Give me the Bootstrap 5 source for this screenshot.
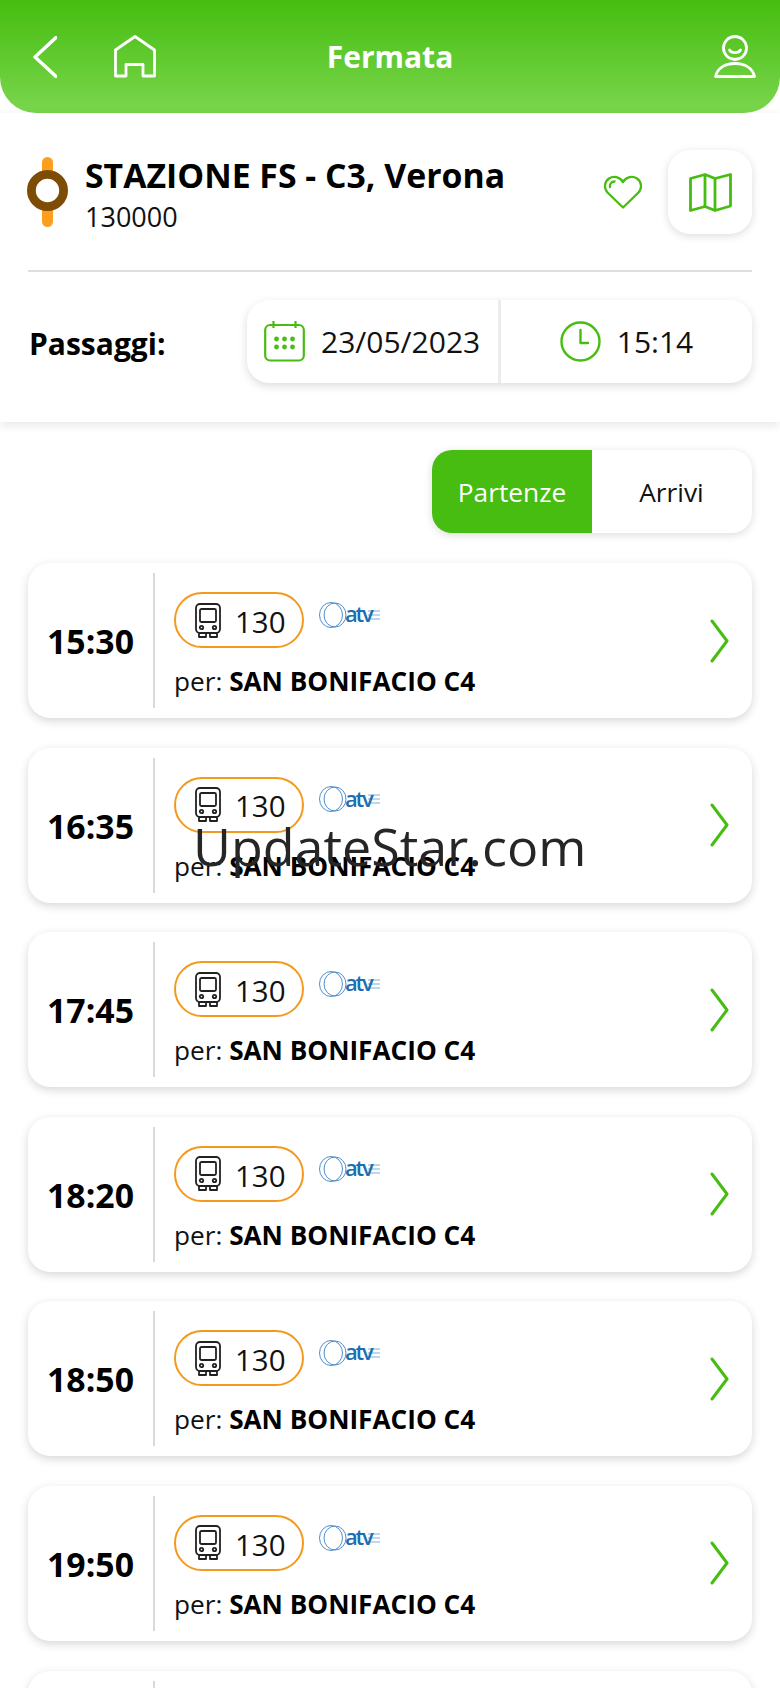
<!DOCTYPE html>
<html lang="it">
<head>
<meta charset="utf-8">
<title>Fermata</title>
<link href="https://cdn.jsdelivr.net/npm/bootstrap@5.3.0/dist/css/bootstrap.min.css" rel="stylesheet">
<style>
html,body{height:1688px;overflow:hidden;background:#fff}
body{font-family:"Open Sans",sans-serif;color:#000;position:relative}
.app-head{height:113px;border-radius:0 0 36px 36px;background:linear-gradient(180deg,#46bd10 0%,#7ad64d 100%);padding:0 24px 0 33px}
.app-head h1{font-size:30px;font-weight:700;color:#fff;margin:0;position:absolute;left:0;right:0;top:37px;text-align:center;line-height:40px}
.home-ic{margin-left:57px}
.top-panel{height:309px;padding:0 28px;box-shadow:0 3px 10px rgba(0,0,0,.1);position:relative;background:#fff}
.stop-row{height:159px;border-bottom:2px solid #dedede;padding-top:44px}
.stop-ic{margin-left:-1px;margin-right:17px}
.stop-name{font-size:33.8px;font-weight:700;line-height:43px;margin-top:-3px}
.stop-code{font-size:27px;line-height:30px;margin-top:5px;color:#111}
.map-btn{width:84px;height:84px;border-radius:22px;box-shadow:0 2px 9px rgba(0,0,0,.14);background:#fff;margin-left:26px;margin-top:-7px}
.heart-ic{margin-top:18px}
.pass-row{height:135px;padding-top:28px}
.pass-label{font-size:30px;font-weight:700;margin-left:1px;line-height:88px}
.picker{width:505px;height:83px;border-radius:22px;box-shadow:0 3px 10px rgba(0,0,0,.14);background:#fff;overflow:hidden}
.pick-date{width:254px;border-right:3px solid #ececec;padding-left:17px;gap:16px}
.pick-time{flex:1;gap:16px;justify-content:center}
.pick-txt{font-size:30px;line-height:85px;color:#111}
.toggle-wrap{padding:28px 28px 30px 0}
.toggle-box{width:320px;height:83px;border-radius:20px;box-shadow:0 2px 9px rgba(0,0,0,.14);overflow:hidden;background:#fff}
.toggle-box .btn{font-size:26.3px;border:0;border-radius:0;padding:2px 0 0;color:#111;line-height:81px}
.toggle-box .btn.on{background:#46bd10;color:#fff;flex:0 0 160px;width:160px}
.runs{padding:0 28px}
.run-card{height:155px;margin-bottom:29.6px;border:0;border-radius:22px;box-shadow:0 3px 10px rgba(0,0,0,.16);background:#fff;padding:10px 22px 10px 0}
.run-time{width:125px;font-size:33.8px;font-weight:700;text-align:center;line-height:157px;flex:none;margin-top:-10px;margin-bottom:-10px}
.run-body{border-left:2px solid #d9d9d9;padding-left:19px;flex:1}
.line-pill{width:130px;height:56px;border:2px solid #f39a1e;border-radius:28px;padding-left:19px;gap:14px;font-size:29.5px;color:#111;margin-top:19px}
.line-pill span{position:relative;top:2px}
.atv{position:relative;width:62px;height:28px;margin-left:15px;margin-top:28px}
.atv-word{position:absolute;left:26px;top:-1px;font-size:22px;line-height:26px;font-weight:600;color:#1c6fb2;letter-spacing:-2.2px}
.per{font-size:26.2px;line-height:34px;margin-top:16px;white-space:nowrap;color:#111}
.per b{font-weight:700;color:#000}
.go{align-self:center;margin-left:-1px;margin-right:1px}
.wm{position:absolute;left:193px;top:810px;font-size:52px;line-height:72px;color:#262626;font-family:"Open Sans",sans-serif;font-weight:400;z-index:5}
</style>
</head>
<body>
<header class="app-head d-flex align-items-center justify-content-between position-relative">
  <div class="d-flex align-items-center">
    <svg width="24" height="42" viewBox="0 0 24 42" fill="none" stroke="#fff" stroke-width="3.4" stroke-linecap="round" stroke-linejoin="round"><path d="M23 1.500 2 21l21 19.500"/></svg>
    <svg class="home-ic" width="42" height="43" viewBox="0 0 42 43" fill="none" stroke="#fff" stroke-width="2.800" stroke-linejoin="round"><path d="M21 1.500 40.500 15v26H29V29.500H12V41H1.500V15Z"/></svg>
  </div>
  <h1>Fermata</h1>
  <svg width="42" height="43" viewBox="0 0 42 43" fill="none" stroke="#fff" stroke-width="2.800" stroke-linecap="round" stroke-linejoin="round"><circle cx="21" cy="13" r="11.500"/><path d="M15.500 15c2 3.500 9 3.500 11 0"/><path d="M1.500 41.500C3.500 33 11 28.500 21 28.500s17.500 4.500 19.500 13Z"/></svg>
</header>

<section class="top-panel">
  <div class="stop-row d-flex align-items-start">
    <svg class="stop-ic flex-none" width="41" height="70" viewBox="0 0 41 70"><rect x="15" y="0" width="11" height="70" rx="5.500" fill="#fb9f1f"/><circle cx="20.500" cy="33.500" r="16.100" fill="#fff" stroke="#7d4d05" stroke-width="8.800"/></svg>
    <div class="flex-grow-1">
      <div class="stop-name">STAZIONE FS - C3, Verona</div>
      <div class="stop-code">130000</div>
    </div>
    <svg class="heart-ic" width="38" height="34" viewBox="0 0 38 34" fill="none" stroke="#46bd10" stroke-width="2.300" stroke-linecap="round" stroke-linejoin="round"><path d="M19 32.500 3.500 17.500C-.5 13 .5 6.500 5 3.500c4.500-2.800 10.500-1.800 14 3.500 3.500-5.300 9.500-6.300 14-3.500 4.500 3 5.500 9.500 1.500 14Z"/><path d="M6 12c-.5-3 1.500-5.500 4.500-5.500"/></svg>
    <div class="map-btn d-flex align-items-center justify-content-center">
      <svg width="43" height="39" viewBox="0 0 43 39" fill="none" stroke="#46bd10" stroke-width="2.800" stroke-linejoin="round"><path d="M1.500 5.500 16 1.500 26 5.500 41.500 1.500V33L26 37.500 16 33.500 1.500 37.500Z"/><path d="M16 1.500v32M26 5.500v32"/></svg>
    </div>
  </div>
  <div class="pass-row d-flex justify-content-between">
    <div class="pass-label">Passaggi:</div>
    <div class="picker d-flex">
      <div class="pick-date d-flex align-items-center">
        <svg width="41" height="41" viewBox="0 0 41 41" fill="none" stroke="#46bd10" stroke-width="2.200"><rect x="1.200" y="4" width="38.600" height="35.500" rx="5"/><path d="M9.500 0v7M31.500 0v7"/><g fill="#46bd10" stroke="none"><circle cx="12.500" cy="18" r="2.400"/><circle cx="20.500" cy="18" r="2.400"/><circle cx="28.500" cy="18" r="2.400"/><circle cx="12.500" cy="26" r="2.400"/><circle cx="20.500" cy="26" r="2.400"/><circle cx="28.500" cy="26" r="2.400"/></g></svg>
        <span class="pick-txt">23/05/2023</span>
      </div>
      <div class="pick-time d-flex align-items-center">
        <svg width="41" height="41" viewBox="0 0 41 41" fill="none" stroke="#46bd10" stroke-width="2.400" stroke-linecap="round" stroke-linejoin="round"><circle cx="20.500" cy="20.500" r="19"/><path d="M20.500 9v13h7.500"/></svg>
        <span class="pick-txt">15:14</span>
      </div>
    </div>
  </div>
</section>

<div class="toggle-wrap d-flex justify-content-end">
  <div class="toggle-box btn-group" role="group">
    <button type="button" class="btn on">Partenze</button>
    <button type="button" class="btn">Arrivi</button>
  </div>
</div>

<main class="runs" id="runs">
</main>
<div class="wm">UpdateStar.com</div>

<template id="tpl">
  <article class="run-card card flex-row">
    <div class="run-time"></div>
    <div class="run-body">
      <div class="d-flex align-items-start">
        <div class="line-pill d-flex align-items-center">
          <svg width="26" height="35" viewBox="0 0 26 35" fill="none" stroke="#222" stroke-width="1.800" stroke-linejoin="round"><rect x="1" y="1" width="24" height="29" rx="4"/><rect x="5" y="6" width="16" height="13" rx="1.500"/><circle cx="6.500" cy="24.500" r="1.700"/><circle cx="19.500" cy="24.500" r="1.700"/><path d="M4 30v4h7v-4M15 30v4h7v-4"/></svg>
          <span>130</span>
        </div>
        <div class="atv">
          <svg width="62" height="26" viewBox="0 0 62 26" fill="none" stroke="#4f8fcb" stroke-width="1"><ellipse cx="12" cy="13" rx="11.500" ry="12.500"/><ellipse cx="16" cy="13" rx="11" ry="12"/><path d="M49 9h12M49 13h12M49 17h12" stroke="#7fb0d8" stroke-width="1.200"/></svg>
          <span class="atv-word">atv</span>
        </div>
      </div>
      <div class="per">per: <b>SAN BONIFACIO C4</b></div>
    </div>
    <svg class="go" width="19" height="44" viewBox="0 0 19 44" fill="none" stroke="#46bd10" stroke-width="3" stroke-linecap="round" stroke-linejoin="round"><path d="M2 2 17 22 2 42"/></svg>
  </article>
</template>
<script>
var box=document.getElementById('runs');
["15:30","16:35","17:45","18:20","18:50","19:50"].forEach(function(t){
  var n=document.getElementById('tpl').content.cloneNode(true);
  n.querySelector('.run-time').textContent=t;
  box.appendChild(n);
});
var last=document.createElement('article');
last.className='run-card card flex-row';
last.innerHTML='<div class="run-time"></div><div class="run-body"></div>';
box.appendChild(last);
</script>
<script src="https://cdn.jsdelivr.net/npm/bootstrap@5.3.0/dist/js/bootstrap.bundle.min.js"></script>
</body>
</html>
